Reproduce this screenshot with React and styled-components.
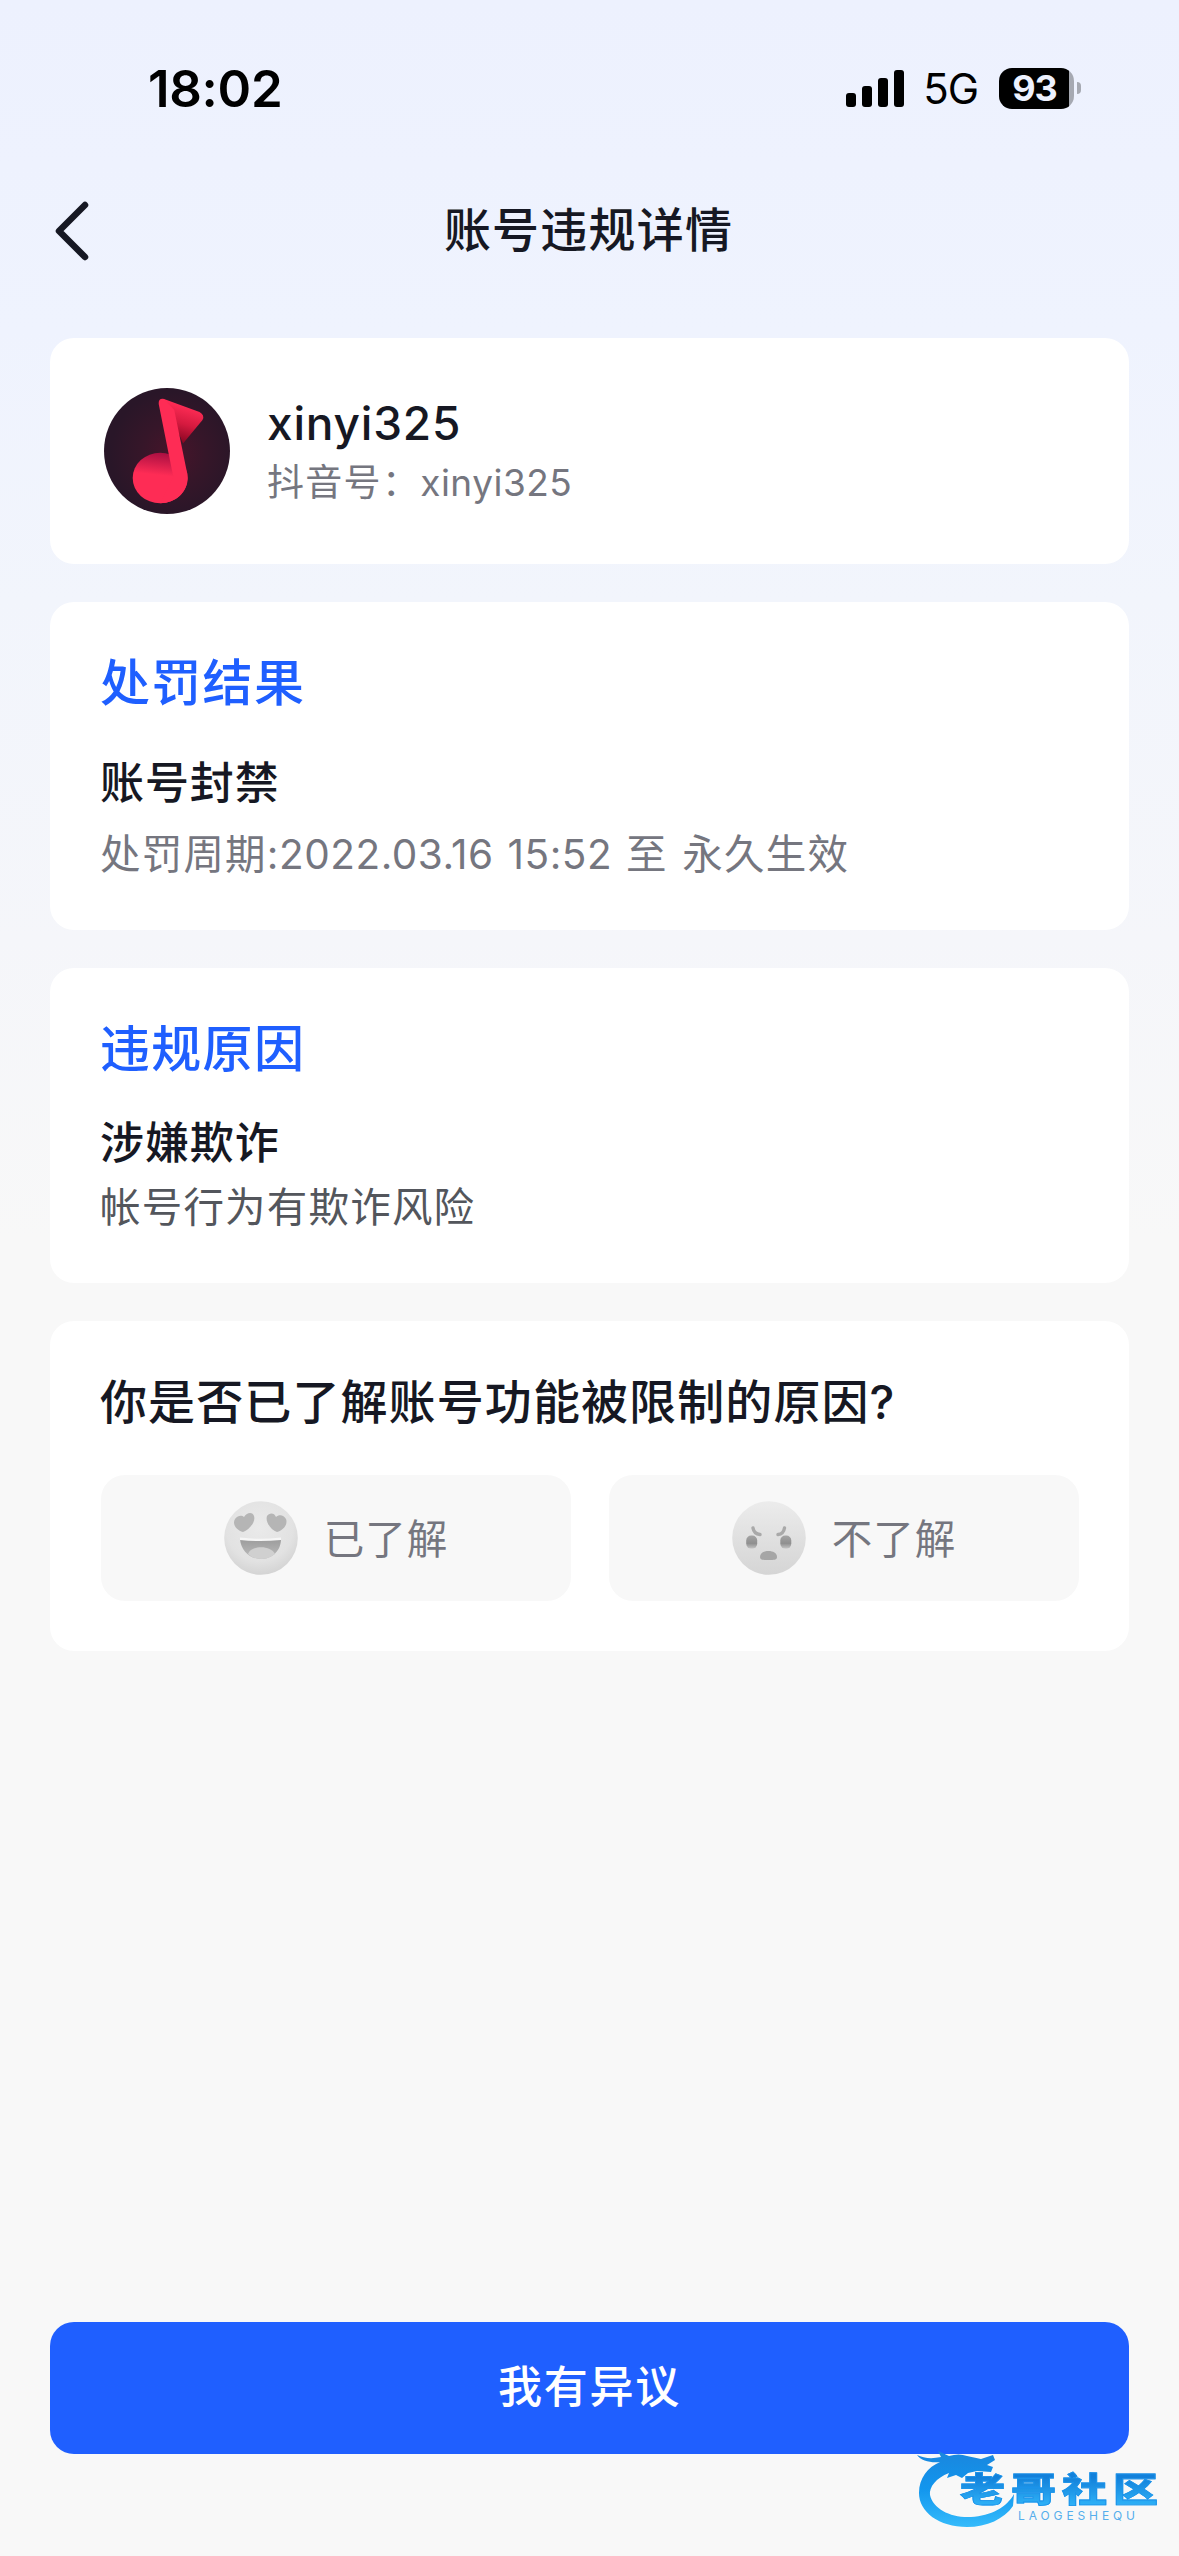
import React from 'react'
import styled, { createGlobalStyle } from 'styled-components';

const GlobalStyle = createGlobalStyle`
  * {
    box-sizing: border-box;
    margin: 0;
    padding: 0;
  }
  body {
    background: #f8f8f8;
    font-family: Inter, 'Noto Sans CJK SC', sans-serif;
    color: #161823;
  }
  button {
    border: none;
    font-family: inherit;
  }
`;

const SignalIcon = () => (
  <svg width="58" height="37" viewBox="0 0 58 37">
    <rect x="0" y="23" width="10" height="14" rx="3" />
    <rect x="16" y="16" width="10" height="21" rx="3" />
    <rect x="32" y="8" width="10" height="29" rx="3" />
    <rect x="48" y="0" width="10" height="37" rx="3" />
  </svg>
);

const BackIcon = () => (
  <svg width="34" height="60" viewBox="0 0 34 60" fill="none">
    <path d="M30 4L4 30l26 26" stroke="#161823" strokeWidth="6.500" strokeLinecap="round" strokeLinejoin="round" />
  </svg>
);

const MusicAvatar = () => (
  <svg width="126" height="126" viewBox="0 0 126 126">
    <defs>
      <radialGradient id="disc" cx="0.55" cy="0.52" r="0.5">
        <stop offset="0" stopColor="#48142a" />
        <stop offset="0.5" stopColor="#361629" />
        <stop offset="1" stopColor="#291628" />
      </radialGradient>
      <linearGradient id="flag" x1="0.6" y1="0" x2="0.35" y2="1">
        <stop offset="0.15" stopColor="#fe2c55" />
        <stop offset="0.55" stopColor="#d51a3f" />
        <stop offset="1" stopColor="#80041f" />
      </linearGradient>
      <linearGradient id="head" x1="0.6" y1="0" x2="0.48" y2="1">
        <stop offset="0" stopColor="#a80e41" />
        <stop offset="0.45" stopColor="#fe2c55" />
      </linearGradient>
    </defs>
    <circle cx="63" cy="63" r="63" fill="url(#disc)" />
    <path d="M60 11l35.500 13q5.500 3 3 8L79 55.500z" fill="url(#flag)" />
    <ellipse cx="56.200" cy="90" rx="27.500" ry="25.300" fill="url(#head)" />
    <path d="M54.700 16q-.5-6 5.500-5L70.300 22l13 64A27.500 25.300 0 0 1 56.200 115.300L69.300 89z" fill="#fe2c55" />
  </svg>
);

const HappyFace = () => (
  <svg width="74" height="74" viewBox="0 0 74 74">
    <defs>
      <radialGradient id="skin" cx="0.48" cy="0.36" r="0.65">
        <stop offset="0" stopColor="#eaeaea" />
        <stop offset="0.7" stopColor="#e2e2e2" />
        <stop offset="1" stopColor="#d3d3d3" />
      </radialGradient>
      <linearGradient id="mouth" x1="0" y1="0" x2="0" y2="1">
        <stop offset="0" stopColor="#9c9c9c" />
        <stop offset="1" stopColor="#bcbcbc" />
      </linearGradient>
    </defs>
    <circle cx="37" cy="37" r="36.800" fill="url(#skin)" />
    <path d="M19 31C12 29 8 23 11 18c3-4 7-4 9-2 3-5 9-5 10-1 2 6-5 14-11 16z" fill="#b5b5b5" />
    <path d="M53 31c7-2 11-8 9-13-2-4-7-5-10-2-2-5-7-4-9-1-2 6 4 14 10 16z" fill="#b5b5b5" />
    <path d="M16 38q20 2 41 0c0 12-9 20-20 20s-20-8-21-20z" fill="url(#mouth)" />
    <path d="M24 53c3-9 23-9 27 0q-6 5-14 5t-13-5z" fill="#d0d0d0" />
    <path d="M16 36.500q20 2.500 41 0v2.500q-21 2-41 0z" fill="#f6f6f6" />
  </svg>
);

const AngryFace = () => (
  <svg width="74" height="74" viewBox="0 0 74 74">
    <defs>
      <linearGradient id="angrySkin" x1="0" y1="0" x2="0" y2="1">
        <stop offset="0" stopColor="#ececec" />
        <stop offset="0.5" stopColor="#e0e0e0" />
        <stop offset="1" stopColor="#d5d5d5" />
      </linearGradient>
      <linearGradient id="eye" x1="0" y1="0" x2="0" y2="1">
        <stop offset="0" stopColor="#a4a4a4" />
        <stop offset="0.6" stopColor="#8f8f8f" />
        <stop offset="1" stopColor="#c4c4c4" />
      </linearGradient>
    </defs>
    <circle cx="37" cy="37" r="36.800" fill="url(#angrySkin)" />
    <path d="M21 27q1 6 7 6.500M52.500 27q-1 6-6.500 6.500" stroke="#a9a9a9" strokeWidth="3.400" strokeLinecap="round" fill="none" />
    <rect x="14.200" y="34.600" width="11" height="13" rx="5" fill="url(#eye)" />
    <rect x="48.300" y="34.600" width="11" height="13" rx="5" fill="url(#eye)" />
    <path d="M28 56c0-4 4-6 8.500-6s8.500 2 8.500 6c0 3-3 3-8.500 3s-8.500 0-8.500-3z" fill="#a6a6a6" />
  </svg>
);

const DragonMark = () => (
  <svg width="100" height="76" viewBox="0 0 100 76">
    <defs>
      <linearGradient id="dragon" x1="0" y1="0" x2="0" y2="1">
        <stop offset="0" stopColor="#1a86dd" />
        <stop offset="0.5" stopColor="#1296ee" />
        <stop offset="1" stopColor="#35bbfb" />
      </linearGradient>
    </defs>
    <path
      d="M0 4q10 5 24 2l-3-6 11 5q10-3 18 0l14 3 12-4 2 5-8 5 6 2-2 5-14-1-9 2-6 5-6-3-9 3 2-5C19 27 12 36 13 44c3 14 21 23 41 22 20-1 36-10 43-23l-1 12C87 68 70 76 50 76 22 76 2 61 2 42 2 27 11 16 23 11 14 12 4 10 0 4z"
      fill="url(#dragon)"
    />
  </svg>
);

const App = () => {
  return (
    <Page>
      <GlobalStyle />
      <StatusBar>
        <Clock>18:02</Clock>
        <StatusRight>
          <SignalIcon />
          <Network>5G</Network>
          <Battery>
            <BatteryBody>93</BatteryBody>
            <BatteryTip />
          </Battery>
        </StatusRight>
      </StatusBar>

      <NavBar>
        <BackButton aria-label="返回"><BackIcon /></BackButton>
        <NavTitle>账号违规详情</NavTitle>
      </NavBar>

      <Content>
        <UserCard>
          <MusicAvatar />
          <UserInfo>
            <UserName>xinyi325</UserName>
            <UserId>抖音号：<Latin>xinyi325</Latin></UserId>
          </UserInfo>
        </UserCard>

        <Card $height={328}>
          <CardTitle>处罚结果</CardTitle>
          <CardSubtitle $top={40}>账号封禁</CardSubtitle>
          <CardText $top={12}>处罚周期<Latin>:2022.03.16 15:52 </Latin>至 永久生效</CardText>
        </Card>

        <Card $height={315}>
          <CardTitle>违规原因</CardTitle>
          <CardSubtitle $top={34}>涉嫌欺诈</CardSubtitle>
          <CardText $top={5} $dark>帐号行为有欺诈风险</CardText>
        </Card>

        <Card $height={330}>
          <Question>你是否已了解账号功能被限制的原因?</Question>
          <Answers>
            <Answer><HappyFace /><AnswerLabel>已了解</AnswerLabel></Answer>
            <Answer><AngryFace /><AnswerLabel>不了解</AnswerLabel></Answer>
          </Answers>
        </Card>
      </Content>

      <Footer>
        <AppealButton>我有异议</AppealButton>
        <Watermark>
          <DragonMark />
          <WatermarkText>
            <WatermarkName>老哥社区</WatermarkName>
            <WatermarkLatin>LAOGESHEQU</WatermarkLatin>
          </WatermarkText>
        </Watermark>
      </Footer>
    </Page>
  )
}

const Page = styled.div`
  width: 1179px;
  height: 2556px;
  display: flex;
  flex-direction: column;
  background: linear-gradient(180deg, #edf1fe 0, #eff3fe 330px, #f2f5fc 600px, #f5f6fa 940px, #f8f8f8 1240px);
  overflow: hidden;
`;

const StatusBar = styled.header`
  height: 176px;
  display: flex;
  justify-content: space-between;
  align-items: center;
  padding: 0 98px 0 148px;
  color: #000;
`;

const Clock = styled.span`
  font-size: 51px;
  font-weight: 600;
  letter-spacing: -0.3px;
`;

const StatusRight = styled.div`
  display: flex;
  align-items: center;
`;

const Network = styled.span`
  margin: 1px 21px 0 19px;
  font-size: 42px;
  letter-spacing: -1px;
`;

const Battery = styled.div`
  display: flex;
  align-items: center;
  gap: 3px;
`;

const BatteryBody = styled.div`
  width: 75px;
  height: 41px;
  padding-right: 4px;
  border-radius: 13px;
  background: linear-gradient(90deg, #000 70px, #a6a9b2 70px);
  color: #edf1fe;
  font-size: 36px;
  font-weight: 700;
  line-height: 41px;
  text-align: center;
  letter-spacing: -1px;
`;

const BatteryTip = styled.div`
  width: 4px;
  height: 12px;
  border-radius: 0 4px 4px 0;
  background: #a6a9b2;
`;

const NavBar = styled.nav`
  height: 110px;
  display: grid;
  grid-template-columns: 90px 1fr 90px;
  align-items: center;
  padding: 0 55px;
`;

const BackButton = styled.button`
  display: flex;
  background: none;
`;

const NavTitle = styled.h1`
  padding: 0 2px 9px 0;
  text-align: center;
  font-size: 47px;
  font-weight: 500;
  letter-spacing: 1.2px;
`;

const Content = styled.main`
  flex: 1;
  display: flex;
  flex-direction: column;
  gap: 38px;
  padding: 52px 50px 0;
`;

const Card = styled.section`
  height: ${({ $height }) => $height}px;
  padding: 51px 50px 0;
  border-radius: 24px;
  background: #fff;
`;

const UserCard = styled.section`
  height: 226px;
  display: flex;
  align-items: center;
  gap: 37px;
  padding: 0 54px;
  border-radius: 24px;
  background: #fff;
`;

const UserInfo = styled.div`
  display: flex;
  flex-direction: column;
  gap: 4px;
`;

const UserName = styled.h2`
  font-size: 46px;
  font-weight: 500;
  line-height: 60px;
  letter-spacing: 0.8px;
`;

const Latin = styled.span`
  letter-spacing: 0.5px;
`;

const UserId = styled.p`
  color: #75767f;
  font-size: 37px;
  line-height: 52px;
  letter-spacing: 1.3px;
`;

const CardTitle = styled.h3`
  color: #1f5fff;
  font-size: 50px;
  font-weight: 500;
  line-height: 60px;
  letter-spacing: 1.3px;
`;

const CardSubtitle = styled.h4`
  margin-top: ${({ $top }) => $top}px;
  font-size: 44px;
  font-weight: 500;
  line-height: 60px;
  letter-spacing: 0.9px;
`;

const CardText = styled.p`
  margin-top: ${({ $top }) => $top}px;
  color: ${({ $dark }) => ($dark ? '#53565c' : '#75767f')};
  font-size: 40.500px;
  line-height: 60px;
  letter-spacing: 1.2px;
  word-spacing: 2px;
`;

const Question = styled.h3`
  font-size: 47px;
  font-weight: 500;
  line-height: 60px;
  letter-spacing: 1.1px;
`;

const Answers = styled.div`
  display: grid;
  grid-template-columns: 1fr 1fr;
  gap: 38px;
  margin: 43px 0 0 1px;
`;

const Answer = styled.button`
  height: 126px;
  display: flex;
  justify-content: center;
  align-items: center;
  gap: 26px;
  border-radius: 24px;
  background: #f8f8f8;
  color: #75767f;
`;

const AnswerLabel = styled.span`
  padding-bottom: 3px;
  font-size: 40.500px;
  letter-spacing: 1px;
`;

const Footer = styled.footer`
  position: relative;
  height: 234px;
  padding: 0 50px;
`;

const AppealButton = styled.button`
  width: 100%;
  height: 132px;
  padding: 0 0 8px 0;
  border-radius: 24px;
  background: #1f5fff;
  color: #fff;
  font-size: 44px;
  font-weight: 500;
  letter-spacing: 1.7px;
`;

/* sits over the lower right corner of the button */
const Watermark = styled.div`
  position: absolute;
  left: 917px;
  top: 129px;
  display: flex;
`;

const WatermarkText = styled.div`
  margin: 20px 0 0 -57px;
`;

const WatermarkName = styled.div`
  height: 56px;
  margin-bottom: -17px;
  font-size: 45px;
  font-weight: 900;
  line-height: 50px;
  letter-spacing: 6px;
  white-space: nowrap;
  transform: scaleY(0.76);
  transform-origin: top;
  -webkit-text-stroke: 1px #1b93ea;
  background: linear-gradient(180deg, #1280da 8px, #32b8fb 50px);
  background-clip: text;
  color: transparent;
`;

const WatermarkLatin = styled.div`
  margin-left: 58px;
  color: #55aeec;
  font-size: 12px;
  line-height: 12px;
  letter-spacing: 3.900px;
`;

export default App
